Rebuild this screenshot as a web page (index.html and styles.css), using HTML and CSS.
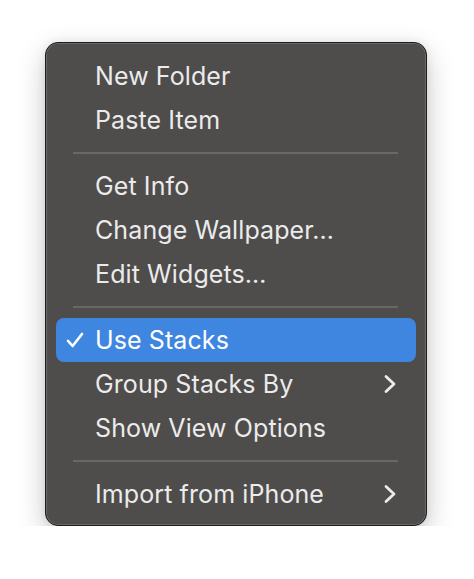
FILE: index.html
```html
<!DOCTYPE html>
<html>
<head>
<meta charset="utf-8">
<link rel="stylesheet" href="styles.css">
</head>
<body>
<div class="menu">
  <div class="item">New Folder</div>
  <div class="item">Paste Item</div>
  <div class="sep"></div>
  <div class="item">Get Info</div>
  <div class="item">Change Wallpaper…</div>
  <div class="item">Edit Widgets…</div>
  <div class="sep"></div>
  <div class="item active">
    <svg class="check" viewBox="0 0 18 16" width="18" height="16"><path d="M2 8.8 L6.6 14 L16 2" fill="none" stroke="#fff" stroke-width="2.6" stroke-linecap="round" stroke-linejoin="round"/></svg>
    Use Stacks
  </div>
  <div class="item">Group Stacks By
    <svg class="chev" viewBox="0 0 14 20" width="14" height="20"><path d="M3 2.5 L11 10 L3 17.5" fill="none" stroke="#ebebeb" stroke-width="2.8" stroke-linecap="round" stroke-linejoin="round"/></svg>
  </div>
  <div class="item">Show View Options</div>
  <div class="sep"></div>
  <div class="item">Import from iPhone
    <svg class="chev" viewBox="0 0 14 20" width="14" height="20"><path d="M3 2.5 L11 10 L3 17.5" fill="none" stroke="#ebebeb" stroke-width="2.8" stroke-linecap="round" stroke-linejoin="round"/></svg>
  </div>
</div>
</body>
</html>
```

FILE: styles.css
```css
html, body {
  margin: 0;
  padding: 0;
  background: #ffffff;
}
body {
  padding: 42px 0 0 45px;
  font-family: Inter, "Noto Sans", "DejaVu Sans", sans-serif;
}
.menu {
  width: 382px;
  box-sizing: border-box;
  background: #4f4c4c;
  border: 1px solid #1c1c1c;
  border-radius: 13px;
  box-shadow: inset 0 0 0 1px #6a6868, 0 10px 28px rgba(0, 0, 0, 0.22), 0 0 8px rgba(0,0,0,0.08);
  padding: 11px 10px 9px 10px;
  display: flex;
  flex-direction: column;
}
.item {
  position: relative;
  height: 44px;
  display: flex;
  align-items: center;
  padding-left: 39px;
  padding-right: 19px;
  border-radius: 8px;
  color: #ebebeb;
  font-size: 25px;
  letter-spacing: 0.1px;
}
.item.active {
  background: #3f86e0;
  color: #ffffff;
}
.check {
  position: absolute;
  left: 10px;
  top: 14px;
}
.chev {
  margin-left: auto;
}
.sep {
  height: 2px;
  margin: 10px 18px 10px 17px;
  background: #696767;
}
```
